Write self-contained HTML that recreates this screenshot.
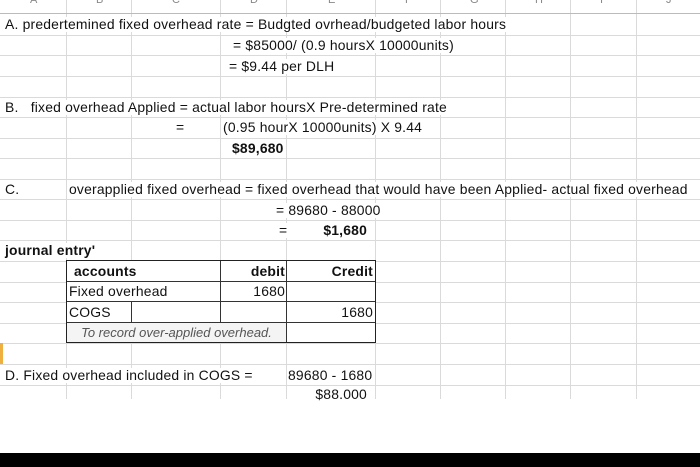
<!DOCTYPE html>
<html><head><meta charset="utf-8"><style>
body{margin:0;width:700px;height:467px;background:#fff;position:relative;overflow:hidden;font-family:"Liberation Sans",sans-serif;font-size:13.9px;letter-spacing:0.2px;color:#111}
.h{position:absolute;left:0;width:700px;height:1px;background:#dadada}
.v{position:absolute;top:0;width:1px;height:399px;background:#dadada}
.t{position:absolute;white-space:nowrap;background:#fff;line-height:15px;padding:0 1px}
.b{font-weight:bold}
.k{position:absolute;background:#333}
.hd{position:absolute;top:-6px;font-size:11px;color:#888}
</style></head><body>
<div class="v" style="left:66px"></div><div class="v" style="left:131px"></div><div class="v" style="left:220px"></div><div class="v" style="left:286px"></div><div class="v" style="left:375px"></div><div class="v" style="left:440px"></div><div class="v" style="left:505px"></div><div class="v" style="left:570px"></div><div class="v" style="left:636px"></div>
<div class="h" style="top:13px;background:#bbb"></div><div class="h" style="top:35px"></div><div class="h" style="top:55px"></div><div class="h" style="top:76px"></div><div class="h" style="top:97px"></div><div class="h" style="top:117px"></div><div class="h" style="top:138px"></div><div class="h" style="top:158px"></div><div class="h" style="top:179px"></div><div class="h" style="top:199px"></div><div class="h" style="top:220px"></div><div class="h" style="top:240px"></div><div class="h" style="top:261px"></div><div class="h" style="top:282px"></div><div class="h" style="top:302px"></div><div class="h" style="top:323px"></div><div class="h" style="top:343px"></div><div class="h" style="top:364px"></div><div class="h" style="top:385px"></div>
<div style="position:absolute;left:0;top:343px;width:3px;height:21px;background:#f0b040"></div>
<span class="hd" style="left:30px">A</span><span class="hd" style="left:96px">B</span><span class="hd" style="left:172px">C</span><span class="hd" style="left:250px">D</span><span class="hd" style="left:328px">E</span><span class="hd" style="left:405px">F</span><span class="hd" style="left:470px">G</span><span class="hd" style="left:535px">H</span><span class="hd" style="left:600px">I</span><span class="hd" style="left:666px">J</span>

<span class="t" style="left:4px;top:17px">A. predertemined fixed overhead rate = Budgted ovrhead/budgeted labor hours</span>
<span class="t" style="left:232px;top:38px">= $85000/ (0.9 hoursX 10000units)</span>
<span class="t" style="left:228px;top:59px">= $9.44 per DLH</span>
<span class="t" style="left:4px;top:100px">B.&nbsp;&nbsp; fixed overhead Applied = actual labor hoursX Pre-determined rate</span>
<span class="t" style="left:175px;top:120px">=</span>
<span class="t" style="left:222px;top:120px">(0.95 hourX 10000units) X 9.44</span>
<span class="t b" style="left:231px;top:141px">$89,680</span>
<span class="t" style="left:4px;top:182px">C.</span>
<span class="t" style="left:68px;top:182px">overapplied fixed overhead = fixed overhead that would have been Applied- actual fixed overhead</span>
<span class="t" style="left:275px;top:203px">= 89680 - 88000</span>
<span class="t" style="left:278px;top:223px">=</span>
<span class="t b" style="right:332px;top:223px">$1,680</span>
<span class="t b" style="left:4px;top:243px">journal entry'</span>

<div style="position:absolute;left:66px;top:260px;width:308px;height:81px;border:1px solid #222;background:#fff"></div>
<div class="k" style="left:67px;top:281px;width:308px;height:1px"></div>
<div class="k" style="left:67px;top:301px;width:308px;height:1px"></div>
<div class="k" style="left:67px;top:322px;width:308px;height:1px"></div>
<div class="k" style="left:220px;top:261px;width:1px;height:61px"></div>
<div class="k" style="left:286px;top:261px;width:1px;height:81px"></div>
<div class="k" style="left:131px;top:302px;width:1px;height:20px"></div>
<div style="position:absolute;left:67px;top:323px;width:219px;height:19px;background:#f4f4f4"></div>
<span class="t b" style="left:73px;top:264px">accounts</span>
<span class="t b" style="right:414px;top:264px">debit</span>
<span class="t b" style="right:326px;top:264px">Credit</span>
<span class="t" style="left:68px;top:284px">Fixed overhead</span>
<span class="t" style="right:414px;top:284px">1680</span>
<span class="t" style="left:68px;top:305px">COGS</span>
<span class="t" style="right:326px;top:305px">1680</span>
<span class="t" style="left:67px;width:217px;text-align:center;top:325px;font-style:italic;color:#555;background:transparent;font-size:13px;letter-spacing:0">To record over-applied overhead.</span>

<span class="t" style="left:4px;top:368px">D. Fixed overhead included in COGS =</span>
<span class="t" style="left:287px;top:368px">89680 - 1680</span>
<span class="t" style="right:332px;top:387px">$88.000</span>
<div style="position:absolute;left:0;top:453px;width:700px;height:14px;background:#000"></div>
</body></html>
